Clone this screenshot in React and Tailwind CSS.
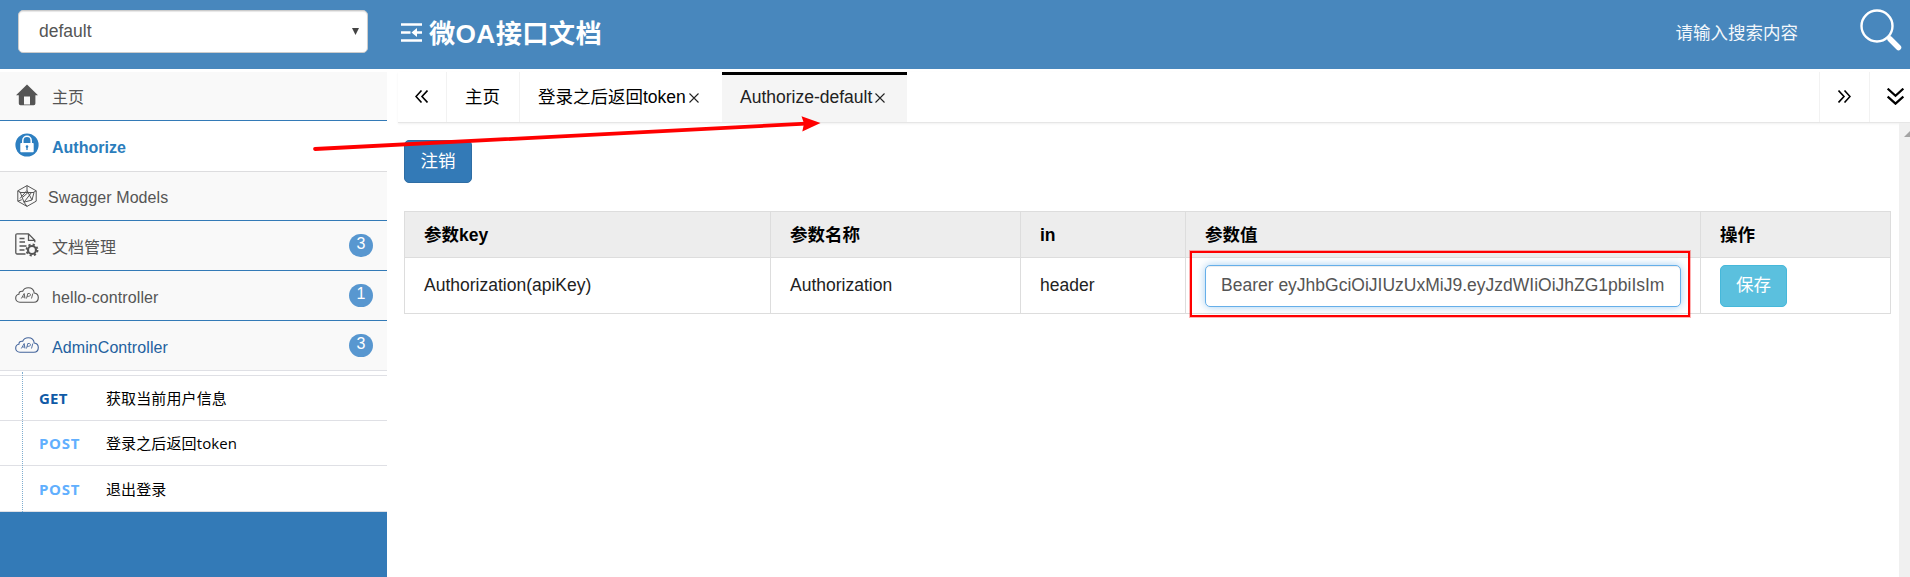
const ui = "font-['Liberation_Sans','Noto_Sans_CJK_SC',sans-serif]";

function HomeIcon() {
  return (
    <svg className="h-[22px] w-[22px]" viewBox="0 0 22 22" fill="#555">
      <path fillRule="evenodd" d="M11 .5 22 11.3h-2.6V19.5q0 1.7-1.7 1.7H4.5q-1.7 0-1.7-1.7v-8.2H0zM8 12.4v8.1h6v-8.1z" />
    </svg>
  );
}

function LockIcon() {
  return (
    <svg className="h-6 w-6" viewBox="0 0 24 24">
      <circle cx="12" cy="12" r="11.6" fill="#2d7fc1" />
      <path d="M7.8 11V7.5a4.2 4.2 0 0 1 8.4 0V11" fill="none" stroke="#fff" strokeWidth="1.5" />
      <rect x="5.3" y="10" width="13.4" height="9.2" rx=".8" fill="#fff" />
      <circle cx="12" cy="13.6" r="1.3" fill="#2d7fc1" />
      <path d="M12 13.6v3.3" stroke="#2d7fc1" strokeWidth="1.3" />
    </svg>
  );
}

function ModelsIcon() {
  return (
    <svg className="h-[22px] w-5" viewBox="0 0 20 22" fill="none" stroke="#555" strokeWidth="1">
      <path d="M10 .6 19.200 5.800v10.400L10 21.400.8 16.200V5.800z" />
      <path d="M10 .6v4.800M.8 5.800l3 1.700M19.200 5.800l-3 1.700M.8 16.200l4-1.500M10 21.400l-3-4.200M2.500 7.500h14.500M3.500 8l3.500 9.200 8-2.200 2-7.500M10 5.400 3 13.500M10 5.400 15 15M7 17.200l7.500-9.700M6 12l5-4.500" />
    </svg>
  );
}

function DocIcon() {
  return (
    <svg className="h-6 w-6" viewBox="0 0 24 24" fill="none" stroke="#555" strokeWidth="1.300">
      <path d="M10.500 21H2.200Q.8 21 .8 19.600V2.200Q.8.800 2.200.800h11.300l6.300 6.500v1.900M13.500.800v6.500h6.300" />
      <path d="M4.500 5.500h5M4.500 9h5.500M4.500 13h7M4.500 17h5" />
      <circle cx="17" cy="17" r="4" strokeWidth="2.200" />
      <circle cx="17" cy="17" r="5.500" strokeWidth="1.900" strokeDasharray="2.160 2.160" />
    </svg>
  );
}

function ApiIcon({ blue }) {
  const color = blue ? "#44659c" : "#555";
  return (
    <svg className="h-4 w-6" viewBox="0 0 24 16" fill="none" stroke={color} strokeWidth="1.100">
      <path d="M5 15.200C2.200 15.200.7 13.300.7 11.200.7 9 2 7.600 3.900 7.300 3.800 5 5.500 3.800 7.700 4.300 8.600 2 10.700.700 13.200.700c3.300 0 5.700 2 6 5.300 2.600.400 4.100 2.200 4.100 4.500 0 2.700-1.800 4.700-4.500 4.700z" />
      <path d="M6.300 11.500 9.200 6.500l.8 5M7.400 10h2.300M11.500 11.500l1.300-5h1.500c1.700 0 1.500 2.800-.5 2.800h-1.600M16.500 11.500l1.300-5" strokeWidth=".9" />
    </svg>
  );
}

function MenuRow({ icon, label, iconClass, textClass, badge, rowClass }) {
  return (
    <div className={`flex shrink-0 items-start border-b ${rowClass}`}>
      <div className={`flex shrink-0 ${iconClass}`}>{icon}</div>
      <span className={`text-base leading-6 whitespace-nowrap ${textClass}`}>{label}</span>
      {badge && (
        <span className="mt-[13px] mr-3.5 ml-auto flex h-[23px] w-6 justify-center rounded-full bg-[#5897d0] text-base leading-5 font-normal text-white">
          {badge}
        </span>
      )}
    </div>
  );
}

function Endpoint({ method, name, methodClass, rowClass }) {
  return (
    <div className={`flex items-center border-b border-[#dfe0e5] pt-px text-[15px] font-['Open_Sans','Noto_Sans_CJK_SC',sans-serif] ${rowClass}`}>
      <span className={`ml-[39px] w-[67px] font-bold ${methodClass}`}>{method}</span>
      <span className="tracking-[0.12px] text-black">{name}</span>
    </div>
  );
}

const gray = "h-[50px] bg-[#f9f9f9] border-[#337ab7]";

function Sidebar() {
  return (
    <aside className="flex w-[387px] shrink-0 flex-col bg-[#337ab7] pt-[3px] shadow-[inset_0_3px_0_white]">
      <MenuRow icon={<HomeIcon />} label="主页" iconClass="ml-4 mt-3 w-9" textClass="mt-3.5 text-[#555]" rowClass="h-[49px] bg-[#f9f9f9] border-[#337ab7]" />
      <MenuRow icon={<LockIcon />} label="Authorize" iconClass="ml-[15px] mt-3 w-[37px]" textClass="mt-[15px] font-bold text-[#2b7dbc]" rowClass="h-[51px] bg-white border-[#dddddf]" />
      <MenuRow icon={<ModelsIcon />} label="Swagger Models" iconClass="ml-[17px] mt-[13px] w-[31px]" textClass="mt-3.5 tracking-[0.08px] text-[#555]" rowClass="h-[49px] bg-[#f9f9f9] border-[#337ab7]" />
      <MenuRow icon={<DocIcon />} label="文档管理" badge="3" iconClass="ml-[15px] mt-3 w-[37px]" textClass="mt-[15px] text-[#555]" rowClass={gray} />
      <MenuRow icon={<ApiIcon />} label="hello-controller" badge="1" iconClass="ml-[15px] mt-4 w-[37px]" textClass="mt-[15px] tracking-[0.1px] text-[#555]" rowClass={gray} />
      <MenuRow icon={<ApiIcon blue />} label="AdminController" badge="3" iconClass="ml-[15px] mt-4 w-[37px]" textClass="mt-[15px] tracking-[0.08px] text-[#23619f]" rowClass="h-[50px] bg-[#f9f9f9] border-[#dfe0e5]" />
      <div className="relative bg-white">
        <div className="h-[5px] border-b border-[#dfe0e5]" />
        <Endpoint method="GET" name="获取当前用户信息" methodClass="tracking-[0.2px] text-[#0f5aa6]" rowClass="h-[45px]" />
        <Endpoint method="POST" name="登录之后返回token" methodClass="tracking-[0.7px] text-[#61affe]" rowClass="h-[45px]" />
        <Endpoint method="POST" name="退出登录" methodClass="tracking-[0.7px] text-[#61affe]" rowClass="h-[46px]" />
        <div className="absolute top-px bottom-0 left-[22px] border-l border-dotted border-[#7fadcf]" />
      </div>
    </aside>
  );
}

function Header() {
  return (
    <header className="flex h-[69px] shrink-0 items-start bg-[#4887bd] pl-[18px]">
      <div className="mt-2.5 flex h-[43px] w-[350px] items-center justify-between rounded-[5px] border border-[#ccc] bg-white pr-2 pl-5 text-[17.5px] text-[#555] shadow-[inset_0_1px_1px_rgba(0,0,0,0.1)]">
        <span className="pb-px">default</span>
        <svg className="h-[7px] w-[7px]" viewBox="0 0 7 7" fill="#444"><path d="M0 0h7L3.500 7z" /></svg>
      </div>
      <svg className="mt-[23px] ml-[33px] h-[19px] w-[21px]" viewBox="0 0 21 19" fill="none" stroke="#fff" strokeWidth="2.600">
        <path d="M0 1.500h21M0 9.500h9.500M0 17.500h21M12 9.500h9" />
        <path d="M16 5v9l-5.500-4.500z" fill="#fff" stroke="none" />
      </svg>
      <h1 className="mt-4 ml-[7px] text-[26.25px] leading-9 font-bold tracking-[0.35px] whitespace-nowrap text-white">微OA接口文档</h1>
      <span className="mt-[21px] mr-px ml-auto text-[17.5px] leading-6 whitespace-nowrap text-[#f3f7fb]">请输入搜索内容</span>
      <svg className="mt-[9px] mr-2 ml-[61px] h-[42px] w-[42px]" viewBox="0 0 42 42" fill="none" stroke="#fff">
        <circle cx="17" cy="17" r="15.500" strokeWidth="2.400" />
        <path d="M28 28l2 2" strokeWidth="3" />
        <path d="M30 30l8.500 8.500" strokeWidth="5.500" strokeLinecap="round" />
      </svg>
    </header>
  );
}

function Close() {
  return (
    <svg className="mt-px ml-[3px] h-[10px] w-[10px]" viewBox="0 0 10 10" fill="none" stroke="#222" strokeWidth="1.100"><path d="M.5.500l9 9M9.500.500l-9 9" /></svg>
  );
}

function Chevrons({ className, width = "1.600" }) {
  return (
    <svg className={className} viewBox="0 0 13 13" fill="none" stroke="#000" strokeWidth={width}>
      <path d="M6.500.500l-5.500 6 5.500 6M12.500.500l-5.500 6 5.500 6" />
    </svg>
  );
}

function TabBar() {
  return (
    <nav className="flex h-[51px] w-full shrink-0 border-b border-[#e6e6e6] text-[17.5px] text-black shadow-[0_1px_2px_rgba(0,0,0,0.06)]">
      <div className="flex w-[49px] items-center border-r border-[#f2f2f2] pb-0.5 pl-[17px]"><Chevrons className="h-[13px] w-[13px]" /></div>
      <div className="flex w-[73px] items-center border-r border-[#f2f2f2] pl-[18px] whitespace-nowrap">主页</div>
      <div className="flex w-[202px] items-center pl-[18px] whitespace-nowrap">登录之后返回token<Close /></div>
      <div className="flex w-[185px] items-center border-t-[3px] border-black bg-[#f5f5f5] pb-[3px] pl-[18px] whitespace-nowrap text-[#222]">Authorize-default<Close /></div>
      <div className="ml-auto flex w-[51px] items-center border-x border-[#f2f2f2] pb-0.5 pl-[18px]"><Chevrons className="h-[13px] w-[13px] rotate-180" /></div>
      <div className="flex w-10 items-center pb-0.5 pl-[17px]"><Chevrons className="h-[17px] w-[17px] -rotate-90" width="1.700" /></div>
    </nav>
  );
}

const th = "border border-[#ddd] px-[19px] pt-0.5 text-left font-bold text-black";
const td = "border border-[#ddd] px-[19px] text-[#222]";

function Content() {
  return (
    <div className="flex min-h-0 flex-1">
      <div className="flex-1 pt-[17px] pl-[6px]">
        <button className="block h-[43px] w-[68px] rounded-[5px] border border-[#2e6da4] bg-[#337ab7] text-[17.5px] text-white">注销</button>
        <table className="mt-7 w-[1487px] table-fixed border-collapse text-[17.5px]">
          <colgroup>
            <col className="w-[366px]" /><col className="w-[250px]" /><col className="w-[165px]" /><col className="w-[515px]" /><col />
          </colgroup>
          <thead>
            <tr className="h-[46px] bg-[#ededed]">
              <th className={th}>参数key</th><th className={th}>参数名称</th><th className={th}>in</th><th className={th}>参数值</th><th className={th}>操作</th>
            </tr>
          </thead>
          <tbody>
            <tr className="h-14">
              <td className={td}>Authorization(apiKey)</td>
              <td className={td}>Authorization</td>
              <td className={td}>header</td>
              <td className="relative border border-[#ddd] pl-[19px]">
                <div className="flex h-[42px] w-[476px] items-center rounded-[5px] border border-[#66afe9] bg-white pl-[15px] whitespace-nowrap text-[#555] shadow-[inset_0_1px_1px_rgba(0,0,0,0.075),0_0_8px_rgba(102,175,233,0.6)]">
                  Bearer eyJhbGciOiJIUzUxMiJ9.eyJzdWIiOiJhZG1pbiIsIm
                </div>
                <div className="absolute -top-[7px] left-1 h-[66px] w-[500px] border-2 border-[#f00] shadow-[0_0_0_1px_rgba(255,0,0,0.3)]" />
              </td>
              <td className="border border-[#ddd] pl-[19px]">
                <button className="block h-[42px] w-[67px] rounded-[5px] border border-[#46b8da] bg-[#5bc0de] text-white">保存</button>
              </td>
            </tr>
          </tbody>
        </table>
      </div>
      <div className="w-[11px] overflow-hidden bg-[#f0f0f0] pt-2 pl-[5px]">
        <svg className="h-[6px] w-[12px]" viewBox="0 0 12 6" fill="#a3a3a3"><path d="M0 6 6 0l6 6z" /></svg>
      </div>
    </div>
  );
}

export default function App() {
  return (
    <div className={`relative flex h-[577px] w-[1910px] flex-col overflow-hidden bg-white ${ui}`}>
      <Header />
      <div className="flex min-h-0 flex-1">
        <Sidebar />
        <main className="flex min-w-0 flex-1 flex-col pt-[3px] pl-[11px]">
          <TabBar />
          <Content />
        </main>
      </div>
      <svg className="pointer-events-none absolute top-[110px] left-[310px] h-[44px] w-[515px]" viewBox="310 110 515 44">
        <path d="M315 149 806 123.700" fill="none" stroke="#f00" strokeWidth="3.800" strokeLinecap="round" />
        <path d="M820.500 123 801.500 116.200l2.500 7.300-1.700 8z" fill="#f00" />
      </svg>
    </div>
  );
}
